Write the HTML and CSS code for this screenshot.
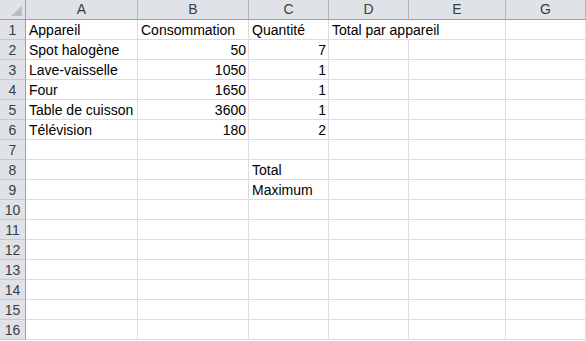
FILE: index.html
```html
<!DOCTYPE html>
<html lang="fr">
<head>
  <meta charset="UTF-8">
  <title>Classeur1</title>
  <link rel="stylesheet" href="styles.css">
</head>
<body>
  <div id="sheet">
    <!-- column headers -->
    <div class="corner">
      <svg width="11" height="10" viewBox="0 0 11 10"><polygon points="0,10 11,10 11,0" fill="#b9bec4"/></svg>
    </div>
    <div class="colHead">A</div>
    <div class="colHead">B</div>
    <div class="colHead">C</div>
    <div class="colHead">D</div>
    <div class="colHead">E</div>
    <div class="colHead">G</div>

    <div class="rowHead">1</div>
    <div class="cell">Appareil</div>
    <div class="cell">Consommation</div>
    <div class="cell">Quantité</div>
    <div class="cell spill">Total par appareil</div>
    <div class="cell"></div>
    <div class="cell"></div>

    <div class="rowHead">2</div>
    <div class="cell">Spot halogène</div>
    <div class="cell num">50</div>
    <div class="cell num">7</div>
    <div class="cell"></div>
    <div class="cell"></div>
    <div class="cell"></div>

    <div class="rowHead">3</div>
    <div class="cell">Lave-vaisselle</div>
    <div class="cell num">1050</div>
    <div class="cell num">1</div>
    <div class="cell"></div>
    <div class="cell"></div>
    <div class="cell"></div>

    <div class="rowHead">4</div>
    <div class="cell">Four</div>
    <div class="cell num">1650</div>
    <div class="cell num">1</div>
    <div class="cell"></div>
    <div class="cell"></div>
    <div class="cell"></div>

    <div class="rowHead">5</div>
    <div class="cell">Table de cuisson</div>
    <div class="cell num">3600</div>
    <div class="cell num">1</div>
    <div class="cell"></div>
    <div class="cell"></div>
    <div class="cell"></div>

    <div class="rowHead">6</div>
    <div class="cell">Télévision</div>
    <div class="cell num">180</div>
    <div class="cell num">2</div>
    <div class="cell"></div>
    <div class="cell"></div>
    <div class="cell"></div>

    <div class="rowHead">7</div>
    <div class="cell"></div><div class="cell"></div><div class="cell"></div><div class="cell"></div><div class="cell"></div><div class="cell"></div>

    <div class="rowHead">8</div>
    <div class="cell"></div>
    <div class="cell"></div>
    <div class="cell">Total</div>
    <div class="cell"></div>
    <div class="cell"></div>
    <div class="cell"></div>

    <div class="rowHead">9</div>
    <div class="cell"></div>
    <div class="cell"></div>
    <div class="cell">Maximum</div>
    <div class="cell"></div>
    <div class="cell"></div>
    <div class="cell"></div>

    <div class="rowHead">10</div>
    <div class="cell"></div><div class="cell"></div><div class="cell"></div><div class="cell"></div><div class="cell"></div><div class="cell"></div>
    <div class="rowHead">11</div>
    <div class="cell"></div><div class="cell"></div><div class="cell"></div><div class="cell"></div><div class="cell"></div><div class="cell"></div>
    <div class="rowHead">12</div>
    <div class="cell"></div><div class="cell"></div><div class="cell"></div><div class="cell"></div><div class="cell"></div><div class="cell"></div>
    <div class="rowHead">13</div>
    <div class="cell"></div><div class="cell"></div><div class="cell"></div><div class="cell"></div><div class="cell"></div><div class="cell"></div>
    <div class="rowHead">14</div>
    <div class="cell"></div><div class="cell"></div><div class="cell"></div><div class="cell"></div><div class="cell"></div><div class="cell"></div>
    <div class="rowHead">15</div>
    <div class="cell"></div><div class="cell"></div><div class="cell"></div><div class="cell"></div><div class="cell"></div><div class="cell"></div>
    <div class="rowHead">16</div>
    <div class="cell"></div><div class="cell"></div><div class="cell"></div><div class="cell"></div><div class="cell"></div><div class="cell"></div>
  </div>
</body>
</html>
```

FILE: styles.css
```css
body {
  margin: 0;
  background-color: #fff;
  font-family: "Liberation Sans", Arial, sans-serif;
  font-size: 14px;
  color: #000;
  overflow: hidden;
}

#sheet {
  display: grid;
  grid-template-columns: 26px 112px 111px 80px 80px 97px 80px;
  grid-auto-rows: 20px;
}

#sheet > div {
  box-sizing: border-box;
  white-space: nowrap;
}

.corner {
  display: flex;
  align-items: flex-end;
  justify-content: flex-end;
  padding: 0 3px 3px 0;
  background-color: #dfe3e8;
  border-right: 1px solid #9c9fa3;
  border-bottom: 1px solid #9c9fa3;
}

.colHead {
  background-color: #dfe3e8;
  border-right: 1px solid #b1b5ba;
  border-bottom: 1px solid #9c9fa3;
  text-align: center;
  line-height: 19px;
  color: #3a3d42;
}

.rowHead {
  background-color: #dfe3e8;
  border-right: 1px solid #9c9fa3;
  border-bottom: 1px solid #c5c9ce;
  text-align: center;
  line-height: 20px;
  color: #3a3d42;
}

.cell {
  border-right: 1px solid #dadcdd;
  border-bottom: 1px solid #dadcdd;
  padding: 0 3px;
  line-height: 21px;
}

.num {
  text-align: right;
  padding-right: 2px;
}

.spill {
  border-right-color: transparent;
}
```
